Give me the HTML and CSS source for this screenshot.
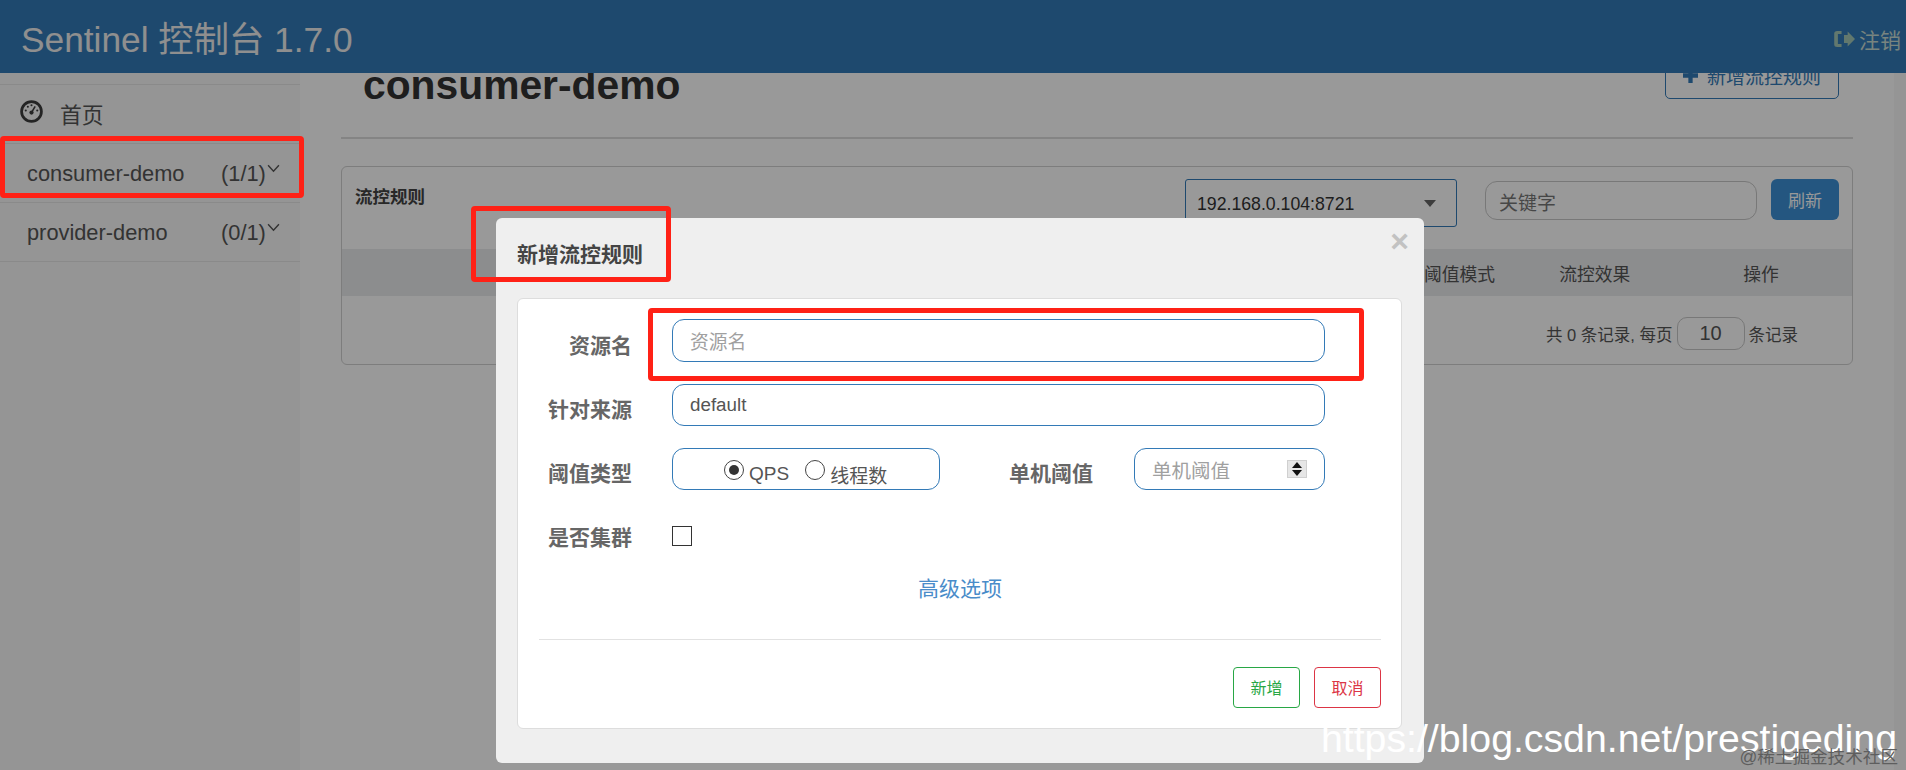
FILE: index.html
```html
<!DOCTYPE html>
<html lang="zh-CN">

<head>
  <meta charset="UTF-8">
  <title>Sentinel 控制台</title>
  <link rel="stylesheet" href="styles.css">
</head>

<body>
  <header class="topbar">
    <span class="brand">Sentinel 控制台 1.7.0</span>
    <a class="logout">
      <svg class="logout-icon" viewBox="0 0 18 18" preserveAspectRatio="none"><path d="M7 1H3.500Q1 1 1 3.500v11Q1 17 3.500 17H7v-3H4V4h3zM9 5h3V1.500L18 9l-6 7.500V13H9z"/></svg>
      注销
    </a>
  </header>

  <div class="layout">
    <aside class="sidebar">
      <div class="side-item">
        <svg class="dash-icon" viewBox="0 0 22 22">
          <circle cx="11" cy="11" r="9.500" fill="none" stroke="currentColor" stroke-width="2.600"/>
          <path d="M11 12l3.500-6" stroke="currentColor" stroke-width="1.500"/>
          <circle cx="11" cy="12" r="2"/>
          <circle cx="5.500" cy="10" r="1"/><circle cx="7.500" cy="6.500" r="1"/><circle cx="11" cy="5" r="1"/><circle cx="16.500" cy="10" r="1"/>
        </svg>
        <span>首页</span>
      </div>
      <div class="side-item side-app">
        <span class="app-name">consumer-demo</span>
        <span class="app-count">(1/1)</span>
        <svg class="chevron" viewBox="0 0 12 8"><path d="M1 1l5 5.500L11 1" fill="none" stroke="currentColor" stroke-width="1.300"/></svg>
      </div>
      <div class="side-item side-app">
        <span class="app-name">provider-demo</span>
        <span class="app-count">(0/1)</span>
        <svg class="chevron" viewBox="0 0 12 8"><path d="M1 1l5 5.500L11 1" fill="none" stroke="currentColor" stroke-width="1.300"/></svg>
      </div>
    </aside>

    <main class="content">
      <div class="page-head">
        <h1>consumer-demo</h1>
        <button class="btn-add">
          <svg class="plus-icon" viewBox="0 0 14 14"><path d="M5 0h4v5h5v4H9v5H5V9H0V5h5z"/></svg>
          新增流控规则
        </button>
      </div>

      <section class="panel">
        <div class="panel-bar">
          <span class="panel-title">流控规则</span>
          <div class="select-box">192.168.0.104:8721<span class="select-arrow"></span></div>
          <div class="keyword">关键字</div>
          <button class="btn-refresh">刷新</button>
        </div>
        <div class="table-head">
          <span class="col-mode">阈值模式</span>
          <span class="col-effect">流控效果</span>
          <span class="col-action">操作</span>
        </div>
        <div class="table-foot">
          <span>共 0 条记录, 每页</span>
          <span class="page-size">10</span>
          <span>条记录</span>
        </div>
      </section>
    </main>

    <div class="scroll-track"></div>
  </div>

  <div class="backdrop"></div>

  <div class="dialog">
    <span class="close">×</span>
    <h3 class="dialog-title">新增流控规则</h3>
    <div class="card">
      <div class="form-row form-row-first">
        <label class="form-label">资源名</label>
        <div class="field field-wide placeholder">资源名</div>
      </div>
      <div class="form-row">
        <label class="form-label">针对来源</label>
        <div class="field field-wide">default</div>
      </div>
      <div class="form-row">
        <label class="form-label">阈值类型</label>
        <div class="field field-radio">
          <span class="radio radio-on"></span><span class="radio-text">QPS</span>
          <span class="radio"></span><span class="radio-text">线程数</span>
        </div>
        <label class="form-label form-label-mid">单机阈值</label>
        <div class="field field-number placeholder">
          单机阈值
          <span class="spinner">
            <span class="spin-up"></span>
            <span class="spin-down"></span>
          </span>
        </div>
      </div>
      <div class="form-row form-row-check">
        <label class="form-label">是否集群</label>
        <span class="checkbox"></span>
      </div>
      <a class="advanced">高级选项</a>
      <div class="card-line"></div>
      <div class="card-actions">
        <button class="btn-line btn-green">新增</button>
        <button class="btn-line btn-red">取消</button>
      </div>
    </div>
  </div>

  <div class="mark mark-app"></div>
  <div class="mark mark-title"></div>
  <div class="mark mark-input"></div>

  <div class="watermark">https://blog.csdn.net/prestigeding</div>
  <div class="watermark-sub">@稀土掘金技术社区</div>
</body>

</html>
```

FILE: styles.css
```css
* {
  box-sizing: border-box;
}

html,
body {
  margin: 0;
  height: 770px;
  overflow: hidden;
}

body {
  position: relative;
  background: #fff;
  color: #333;
  font-family: "Liberation Sans", "Noto Sans CJK SC", sans-serif;
}

.topbar {
  height: 73px;
  background: #337ab7;
  display: flex;
  align-items: center;
  justify-content: space-between;
  padding: 0 5px 0 21px;
}

.brand {
  font-size: 35.300px;
  color: #eee;
}

.logout {
  display: flex;
  align-items: center;
  gap: 4px;
  font-size: 21px;
  color: #c8dcd4;
  padding-top: 4px;
}

.logout-icon {
  width: 22px;
  height: 18px;
  fill: #a3c9b8;
}

.layout {
  display: flex;
  height: 697px;
}

.sidebar {
  width: 300px;
  flex: none;
  background: #f8f8f8;
  padding-top: 11px;
}

.side-item {
  height: 59px;
  border-top: 1px solid #e7e7e7;
  display: flex;
  align-items: center;
  padding-left: 20px;
  font-size: 21.800px;
  color: #555;
}

.side-item:nth-child(1) span {
  margin-top: -2px;
}

.side-item:nth-child(3) {
  border-bottom: 1px solid #e7e7e7;
  height: 60px;
}

.dash-icon {
  width: 23px;
  height: 23px;
  fill: currentColor;
  color: #3d3d3d;
  margin-right: 17px;
  margin-top: -5px;
}

.side-app {
  padding-left: 27px;
  padding-top: 1px;
}

.app-name {
  width: 194px;
}

.app-count {
  width: 45px;
  margin-right: 1px;
}

.chevron {
  width: 13px;
  height: 9px;
  margin: -10px 0 0 0;
}

.content {
  flex: 1;
  overflow: hidden;
  padding: 0 41px;
}

.scroll-track {
  width: 12px;
  flex: none;
  background: #f8f8f8;
}

.page-head {
  margin-top: -20px;
  height: 86px;
  border-bottom: 2px solid #ddd;
  display: flex;
  justify-content: space-between;
  align-items: flex-start;
  padding: 0 14px 0 22px;
}

h1 {
  margin: 0;
  font-size: 40.800px;
  line-height: 46px;
  padding-top: 9px;
  color: #333;
}

.btn-add {
  width: 174px;
  height: 46px;
  background: #fff;
  border: 1px solid #337ab7;
  border-radius: 5px;
  color: #337ab7;
  font: inherit;
  font-size: 19px;
  display: flex;
  align-items: center;
  justify-content: center;
  gap: 9px;
  padding: 0 0 2px;
}

.plus-icon {
  width: 15px;
  height: 15px;
  fill: #337ab7;
}

.panel {
  margin-top: 27px;
  height: 199px;
  border: 1px solid #d0d0d0;
  border-radius: 6px;
}

.panel-bar {
  height: 82px;
  display: flex;
  align-items: flex-start;
  padding: 12px 13px 0 13px;
}

.panel-title {
  font-size: 17.500px;
  font-weight: bold;
  color: #444;
  padding-top: 4px;
  width: 830px;
}

.select-box {
  width: 272px;
  height: 48px;
  border: 1px solid #337ab7;
  border-radius: 3px;
  font-size: 17.700px;
  padding: 14px 11px;
  position: relative;
  margin-right: 28px;
}

.select-arrow {
  position: absolute;
  right: 20px;
  top: 20px;
  border-top: 7px solid #666;
  border-left: 6px solid transparent;
  border-right: 6px solid transparent;
}

.keyword {
  width: 272px;
  height: 39px;
  margin-top: 2px;
  border: 1px solid #c8c8c8;
  border-radius: 12px;
  padding: 6px 13px;
  font-size: 19px;
  color: #777;
  margin-right: 14px;
}

.btn-refresh {
  width: 68px;
  height: 41px;
  background: #3c90d6;
  border: none;
  border-radius: 6px;
  color: #fff;
  font: inherit;
  font-size: 17px;
  padding: 0;
}

.table-head {
  height: 47px;
  background: #eaebed;
  display: flex;
  align-items: center;
  font-size: 17.800px;
  color: #555;
}

.col-mode {
  margin-left: 1082px;
}

.col-effect {
  margin-left: 64px;
}

.col-action {
  margin-left: 113px;
}

.table-foot {
  display: flex;
  align-items: center;
  justify-content: flex-end;
  gap: 4px;
  height: 75px;
  padding: 0 54px 0 0;
  font-size: 16.500px;
  color: #555;
}

.page-size {
  width: 68px;
  height: 33px;
  border: 1px solid #c8c8c8;
  border-radius: 10px;
  text-align: center;
  font-size: 20px;
  line-height: 31px;
}

.backdrop {
  position: absolute;
  inset: 0;
  background: rgba(0, 0, 0, 0.4);
}

.dialog {
  position: absolute;
  left: 496px;
  top: 218px;
  width: 928px;
  height: 545px;
  background: #efefef;
  border-radius: 6px;
  padding: 0 22px 0 21px;
}

.close {
  position: absolute;
  right: 15px;
  top: 5px;
  font-size: 32px;
  font-weight: bold;
  line-height: 36px;
  color: #c2c2c2;
}

.dialog-title {
  margin: 0;
  height: 80px;
  padding-top: 22px;
  font-size: 21px;
  line-height: 30px;
  color: #444;
}

.card {
  height: 431px;
  background: #fff;
  border: 1px solid #ddd;
  border-radius: 6px;
  padding: 20px 20px 0 21px;
}

.form-row {
  display: flex;
  align-items: center;
  height: 42px;
  margin-bottom: 22px;
}

.form-row-first {
  height: 43px;
}

.form-row-check {
  height: 48px;
  margin-bottom: 0;
}

.form-row-check .form-label {
  padding-top: 0;
}

.form-label {
  width: 93px;
  margin-right: 40px;
  text-align: right;
  font-size: 21px;
  font-weight: bold;
  color: #666;
  white-space: nowrap;
  flex: none;
  padding-top: 6px;
}

.form-label-mid {
  width: 153px;
  margin-right: 41px;
}

.field {
  height: 100%;
  border: 1px solid #337ab7;
  border-radius: 12px;
  display: flex;
  align-items: center;
  padding: 0 17px;
  font-size: 18.800px;
  color: #555;
}

.field-wide {
  width: 653px;
}

.placeholder {
  color: #a0a0a0;
}

.field-radio {
  width: 268px;
  padding: 0 0 0 51px;
}

.radio {
  width: 20px;
  height: 20px;
  margin-top: 1px;
  border: 1px solid #444;
  border-radius: 50%;
  background: #fff;
  display: block;
  position: relative;
  flex: none;
}

.radio-on::after {
  content: "";
  position: absolute;
  inset: 4px;
  background: #333;
  border-radius: 50%;
}

.radio-text {
  margin: 10px 16px 0 5px;
  font-size: 19px;
}

.field-number {
  width: 191px;
  justify-content: space-between;
  padding-right: 17px;
  padding-left: 17px;
  font-size: 19.500px;
}

.spinner {
  width: 20px;
  height: 18px;
  background: #e6e6e6;
  border: 1px solid #d0d0d0;
  display: flex;
  flex-direction: column;
  align-items: center;
  justify-content: center;
  gap: 2px;
}

.spin-up {
  border-bottom: 6px solid #111;
  border-left: 5px solid transparent;
  border-right: 5px solid transparent;
}

.spin-down {
  border-top: 6px solid #111;
  border-left: 5px solid transparent;
  border-right: 5px solid transparent;
}

.checkbox {
  width: 20px;
  height: 20px;
  border: 1.500px solid #333;
  background: #fff;
}

.advanced {
  display: block;
  height: 56px;
  line-height: 56px;
  padding-top: 1px;
  text-align: center;
  color: #4a8cc9;
  font-size: 21px;
}

.card-line {
  margin-top: 23px;
  border-top: 1px solid #e2e2e2;
}

.card-actions {
  display: flex;
  justify-content: flex-end;
  gap: 14px;
  margin-top: 27px;
}

.btn-line {
  width: 67px;
  height: 41px;
  background: #fff;
  border: 1px solid;
  border-radius: 4px;
  font: inherit;
  font-size: 16px;
  padding: 0 0 2px;
}

.btn-green {
  color: #28a745;
  border-color: #28a745;
}

.btn-red {
  color: #dc3545;
  border-color: #dc3545;
}

.mark {
  position: absolute;
  border: 5px solid #ff2116;
  border-radius: 4px;
}

.mark-app {
  left: 0;
  top: 136px;
  width: 304px;
  height: 62px;
}

.mark-title {
  left: 471px;
  top: 206px;
  width: 200px;
  height: 76px;
}

.mark-input {
  left: 648px;
  top: 308px;
  width: 716px;
  height: 73px;
}

.watermark {
  position: absolute;
  right: 9px;
  top: 715px;
  font-size: 39.250px;
  line-height: 46px;
  color: #fff;
  white-space: nowrap;
}

.watermark-sub {
  position: absolute;
  right: 8px;
  top: 747px;
  font-size: 17.600px;
  line-height: 20px;
  color: #5e5e5e;
  white-space: nowrap;
}
```
